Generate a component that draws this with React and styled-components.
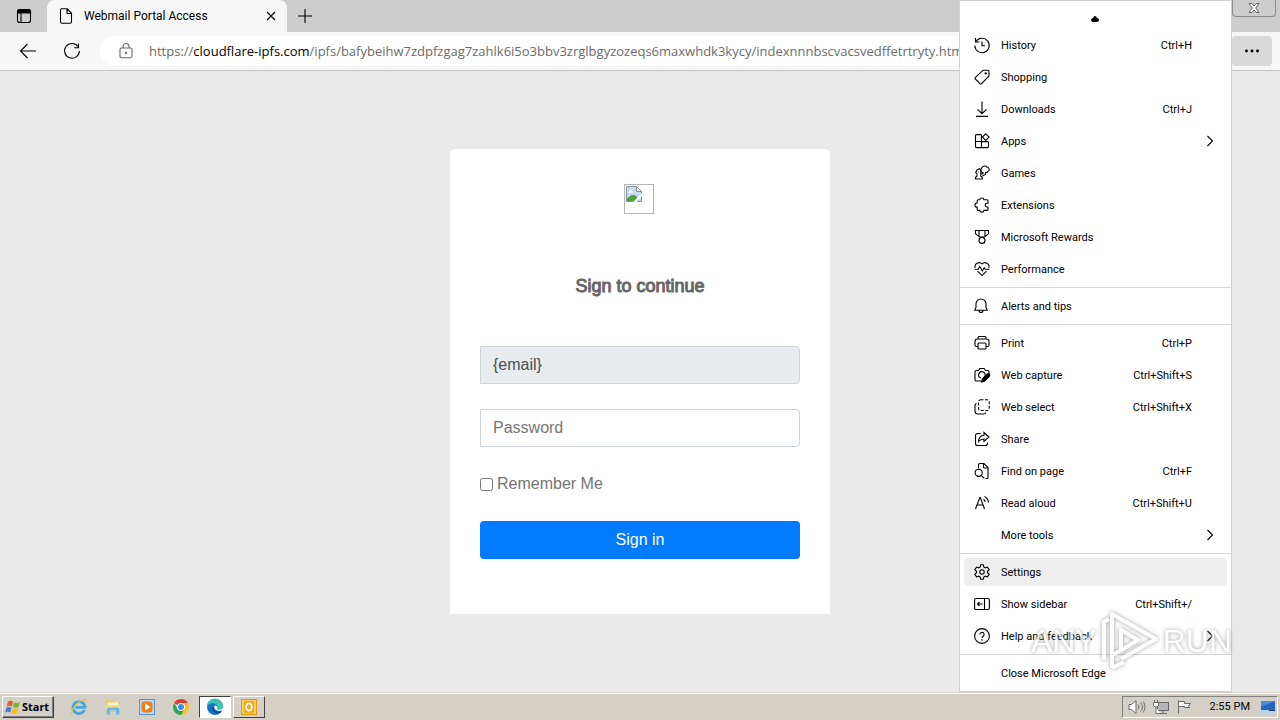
import React from "react";
import styled, { createGlobalStyle } from "styled-components";

const mainMenu = [
  [
    { icon: "history", label: "History", keys: "Ctrl+H" },
    { icon: "shopping", label: "Shopping" },
    { icon: "downloads", label: "Downloads", keys: "Ctrl+J" },
    { icon: "apps", label: "Apps", sub: true },
    { icon: "games", label: "Games" },
    { icon: "extensions", label: "Extensions" },
    { icon: "rewards", label: "Microsoft Rewards" },
    { icon: "performance", label: "Performance" },
  ],
  [{ icon: "alerts", label: "Alerts and tips" }],
  [
    { icon: "print", label: "Print", keys: "Ctrl+P" },
    { icon: "capture", label: "Web capture", keys: "Ctrl+Shift+S" },
    { icon: "select", label: "Web select", keys: "Ctrl+Shift+X" },
    { icon: "share", label: "Share" },
    { icon: "find", label: "Find on page", keys: "Ctrl+F" },
    { icon: "read", label: "Read aloud", keys: "Ctrl+Shift+U" },
    { label: "More tools", sub: true },
  ],
  [
    { icon: "settings", label: "Settings", active: true },
    { icon: "sidebar", label: "Show sidebar", keys: "Ctrl+Shift+/" },
    { icon: "help", label: "Help and feedback", sub: true },
  ],
  [{ label: "Close Microsoft Edge" }],
];

const icons = {
  history: (
    <>
      <path d="M1.5 1v4h4" />
      <path d="M1.8 4.8A7.2 7.2 0 1 1 .8 8.5" />
      <path d="M8 4.5v4.2h3" />
    </>
  ),
  shopping: (
    <>
      <path d="M9.2 1.2h4.6a1.2 1.2 0 0 1 1.2 1.2V7L7.6 14.6a1.2 1.2 0 0 1-1.7 0L1.4 10a1.2 1.2 0 0 1 0-1.7z" />
      <circle cx="11.7" cy="4.4" r=".6" fill="currentColor" />
    </>
  ),
  downloads: <path d="M8 .5v12M3.5 8.3 8 12.7l4.5-4.4M2 15.4h12" />,
  apps: (
    <>
      <path d="M7.5 8.5V2.6a1 1 0 0 0-1-1h-4a1 1 0 0 0-1 1v11a1 1 0 0 0 1 1h11a1 1 0 0 0 1-1v-4a1 1 0 0 0-1-1zM1.5 8.5h6v6" />
      <path d="m11.7.8 3.3 3.3-3.3 3.3-3.3-3.3z" />
    </>
  ),
  games: (
    <>
      <path d="M1.5 14v-1.8l1.500-1V9L1.700 7.500 3.200 4.800l2.600-1 1 1.800v5.600l1.500 1V14z" />
      <path d="M4.200 7h.8M6.800 8.800H9V7.600a2.300 2.300 0 0 1-1.500-3.900 2.200 2.200 0 0 1 2-2.200 2.400 2.400 0 0 1 3.600.8 2.200 2.200 0 0 1 .8 4.200 2 2 0 0 1-2.400 1V9.500L8.500 11" />
    </>
  ),
  extensions: (
    <path d="M5.700 2.800a2.200 2.200 0 0 1 4.300 0h3a1 1 0 0 1 1 1v2.400h-1a1.900 1.900 0 0 0 0 3.800h1v2.400a1 1 0 0 1-1 1h-3a2.200 2.200 0 0 1-4.300 0h-1.500a1 1 0 0 1-1-1v-2a2.200 2.200 0 0 1 0-4.400V3.800a1 1 0 0 1 1-1z" />
  ),
  rewards: (
    <>
      <path d="M1.500 1.500h13v2.800a1 1 0 0 1-.4.800L10.500 8h-5L1.900 5.100a1 1 0 0 1-.4-.8zM5 1.500V7M11 1.500V7" />
      <circle cx="8" cy="11.400" r="3" />
    </>
  ),
  performance: (
    <>
      <path d="M1.200 6.800A4 4 0 0 1 8 3a4 4 0 0 1 6.800 3.800M3.500 10.200 8 14.600l4.500-4.400" />
      <path d="M.5 8.200h3.700l1.600-2.700L8.300 10l1.900-3.200.9 1.400h4.400" />
    </>
  ),
  alerts: (
    <path d="M7 1a5 5 0 0 0-5 5v3.500L.8 12.300h12.400L12 9.500V6a5 5 0 0 0-5-5zM5 12.500a2 2 0 0 0 4 0" />
  ),
  print: (
    <>
      <path d="M4 4V2.500a1 1 0 0 1 1-1h6a1 1 0 0 1 1 1V4M4 11.500H2.500A1.500 1.500 0 0 1 1 10V6.500A2.500 2.500 0 0 1 3.500 4h9A2.500 2.500 0 0 1 15 6.500V10a1.500 1.500 0 0 1-1.500 1.500H12" />
      <rect x="4" y="8" width="8" height="6" rx="1" />
    </>
  ),
  capture: (
    <>
      <path d="M7 14H2.500A1.500 1.500 0 0 1 1 12.500V5a1.500 1.500 0 0 1 1.500-1.500h2l1.300-2h4.400l1.300 2h2A1.500 1.500 0 0 1 15 5v2" />
      <path d="M7 11a3.200 3.200 0 1 1 4-2.500" />
      <path
        d="m7.500 15 .8-3.200 4.800-4.600a1.500 1.500 0 0 1 2.200 2.200l-4.800 4.800z"
        fill="currentColor"
      />
    </>
  ),
  select: (
    <>
      <rect x="4.500" y=".8" width="10.700" height="10.700" rx="2" strokeDasharray="3 1.500" />
      <path d="M2.500 4.500C1.500 5 1 5.500 1 6.500V12a3 3 0 0 0 3 3h5.500c1 0 2-.5 2.500-1.500" />
    </>
  ),
  share: (
    <>
      <path d="M6.500 2.500h-3a2 2 0 0 0-2 2v8a2 2 0 0 0 2 2h8a2 2 0 0 0 2-2v-1" />
      <path d="M10 1.500 15 6l-5 4.400V8c-2.500 0-4 .8-5.500 2.500.2-3.300 2-6 5.500-6.300z" />
    </>
  ),
  find: (
    <>
      <path d="M4.500 5.500v-4a1 1 0 0 1 1-1H10l4 4v10a1 1 0 0 1-1 1h-1.500M9.500.5V4a1 1 0 0 0 1 1H14" />
      <circle cx="4.700" cy="9.800" r="3.600" />
      <path d="m7.300 12.400 3 3" />
    </>
  ),
  read: (
    <>
      <path d="m1.500 14 4.300-11.500h.5L10.500 14M3 10h6" />
      <path d="M9.500 4.200c1 .8 1.500 1.600 1.800 2.800M10.500 1.500c2.300 1.300 3.800 3.300 4 6" />
    </>
  ),
  settings: (
    <>
      <path d="M6.700.8h2.600l.5 2.100 1.500.9 2.100-.7 1.800 2.600-1.700 1.600v1.400l1.700 1.600-1.800 2.600-2.100-.7-1.500.9-.5 2.100H6.700l-.5-2.100-1.500-.9-2.100.7-1.800-2.600 1.700-1.600V7.300L.8 5.700l1.800-2.600 2.100.7 1.500-.9z" />
      <circle cx="8" cy="8" r="2.200" />
    </>
  ),
  sidebar: (
    <>
      <rect x=".6" y="2.500" width="14.800" height="11" rx="1.500" />
      <path d="M10.500 2.500v11M8.500 8h-5M5.500 6l-2 2 2 2" />
    </>
  ),
  help: (
    <>
      <circle cx="8" cy="8" r="7.400" />
      <path d="M5.900 6.500a2.100 2.100 0 1 1 3.300 1.700C8.400 8.800 8 9.100 8 10" />
      <circle cx="8" cy="11.800" r=".3" />
    </>
  ),
  tabs: (
    <>
      <rect x="1.500" y="1.500" width="13" height="13" rx="2" />
      <path d="M1.500 3.500a2 2 0 0 1 2-2h9a2 2 0 0 1 2 2V5h-13z" fill="currentColor" />
      <path d="M5 5v9" />
    </>
  ),
  page: (
    <path d="M3.500.8h5.700l4.300 4.500v8.400a1.500 1.500 0 0 1-1.500 1.500H4a1.500 1.500 0 0 1-1.500-1.500V1.800a1 1 0 0 1 1-1zM9 1v4.500h4.300" />
  ),
  close: <path d="m4 4 8 8M12 4l-8 8" />,
  plus: <path d="M8 1v14M1 8h14" />,
  back: <path d="M16 8H.8M7.500 1 .5 8l7 7" />,
  reload: <path d="M14 3.500A7.400 7.400 0 1 0 15.400 8M14.500.5v4.300h-4.300" />,
  lock: (
    <>
      <rect x="2" y="5" width="12" height="9.800" rx="1.500" />
      <path d="M5 5V3.500a3 3 0 0 1 6 0V5" />
      <circle cx="8" cy="10" r=".6" fill="currentColor" />
    </>
  ),
  more: (
    <g fill="currentColor">
      <circle cx="2.500" cy="8" r=".9" />
      <circle cx="8" cy="8" r=".9" />
      <circle cx="13.500" cy="8" r=".9" />
    </g>
  ),
  chevron: <path d="m5.500 3 5 5-5 5" />,
};

function Icon({ name }) {
  return (
    <svg
      width="16"
      height="16"
      viewBox="0 0 16 16"
      fill="none"
      stroke="currentColor"
      strokeWidth="1.1"
      overflow="visible"
      aria-hidden="true"
    >
      {icons[name]}
    </svg>
  );
}

function BrokenImage() {
  return (
    <svg width="16" height="16" viewBox="0 0 16 16" aria-hidden="true">
      <path d="M.5.5h10l5 5v10H.5z" fill="#c3d9f4" stroke="#8b8f96" />
      <path d="M2.500 5.500a2 2 0 0 1 3.500-.8 1.600 1.600 0 0 1 1.500 2h-5z" fill="#fff" />
      <path d="M1 15v-2c3-4 6-5 9-3l3 5z" fill="#4ca23c" />
      <path d="m7 16 9-9v3l-5 6z" fill="#fff" />
      <path d="M10.500.5v5h5z" fill="#f2f2f2" stroke="#8b8f96" />
    </svg>
  );
}

function WindowsFlag() {
  return (
    <svg width="16" height="16" viewBox="0 0 16 16" aria-hidden="true">
      <path d="M3 2.500c2-1 3.600-.8 5 .2L6.800 7.500c-1.500-1-3.200-1-5 0z" fill="#e8562a" />
      <path d="M9 3.200c1.800 1 3.800 1 6 0l-1.400 4.800c-2 1-4 .9-5.800-.2z" fill="#79b530" />
      <path d="M1.400 8.600c2-1 3.600-.8 5 .1L5.200 13.500c-1.500-1-3.200-1-5 0z" fill="#3a7fd5" />
      <path d="M7.500 9.200c1.800 1 3.800 1 5.800 0L12 14c-2 1-4 .9-5.800-.2z" fill="#f7bd1c" />
    </svg>
  );
}

function ExplorerLogo() {
  return (
    <svg width="18" height="18" viewBox="0 0 18 18" aria-hidden="true">
      <path
        d="M14.500 12A6 6 0 1 1 15 9.300H5.500"
        fill="none"
        stroke="#43a9e2"
        strokeWidth="2.8"
      />
      <path
        d="M2.500 16.500C-.5 15 5 6.500 10.500 3c4-2.500 6.500-2 5.500 1"
        fill="none"
        stroke="#f0c040"
        strokeWidth="1.3"
      />
    </svg>
  );
}

function FolderLogo() {
  return (
    <svg width="18" height="18" viewBox="0 0 18 18" aria-hidden="true">
      <path d="M2 2h6l1.500 2H16v10H2z" fill="#e9c766" />
      <path d="M3.500 4.500h11V8h-11z" fill="#fff7d8" />
      <path d="M2 7h14v6H2z" fill="#f5dc8b" />
      <path d="M2.500 16.500v-5a2 2 0 0 1 2-2h9a2 2 0 0 1 2 2v5H12v-4H6v4z" fill="#6db8e3" />
    </svg>
  );
}

function PlayerLogo() {
  return (
    <svg width="18" height="18" viewBox="0 0 18 18" aria-hidden="true">
      <rect x="1.500" y="1.500" width="15" height="15" fill="#b9d8f2" stroke="#5594cc" />
      <rect x="3.500" y="3.500" width="11" height="11" rx="3" fill="#f07d16" />
      <path d="m7 5.500 5.500 3.500L7 12.500z" fill="#fff" />
    </svg>
  );
}

function ChromeLogo() {
  return (
    <svg width="18" height="18" viewBox="0 0 18 18" aria-hidden="true">
      <path d="M9 9 2.100 5A8 8 0 0 1 15.900 5z" fill="#e33b2e" />
      <path d="M9 9V5h6.900A8 8 0 0 1 9 17z" fill="#fbc116" />
      <path d="M9 17A8 8 0 0 1 2.100 5l3.400 6h6.900z" fill="#2da44e" />
      <circle cx="9" cy="9" r="4" fill="#fff" />
      <circle cx="9" cy="9" r="3" fill="#4285f4" />
    </svg>
  );
}

function EdgeLogo() {
  return (
    <svg width="18" height="18" viewBox="0 0 18 18" aria-hidden="true">
      <circle cx="9" cy="9" r="8" fill="#1372c4" />
      <path d="M1 9a8 8 0 0 1 16-1c.3 2.500-1.300 4-3.600 4-2 0-3-.8-2.400-1.800C11.800 7 9 5 6 5.300 3.500 5.600 1.700 7 1 9z" fill="#37c2b1" />
      <path d="M7 8.500c-2 3 1 7.500 5.500 6.700 1.500-.3 2.500-1 3.300-1.800-2.600 1-7.800.2-7.200-4z" fill="#0d4a92" />
      <path d="M9 7.500c-1.500.8-.8 4 2 5 2 .6 4.500.4 6-1V9.500c-1 2-3.500 2.500-5 2-1.500-.4-1.300-1-1-1.700.3-1-.8-2.500-2-2.300z" fill="#fff" />
    </svg>
  );
}

function OutlookLogo() {
  return (
    <svg width="18" height="18" viewBox="0 0 18 18" aria-hidden="true">
      <rect x="1.500" y="1.500" width="15" height="15" fill="#f8cf5a" stroke="#d99a14" />
      <rect x="4" y="3" width="10" height="12" fill="#efa91e" />
      <ellipse cx="9" cy="9" rx="2.800" ry="3.700" fill="none" stroke="#fff" strokeWidth="1.8" />
    </svg>
  );
}

function TrayIcons() {
  return (
    <svg width="66" height="16" viewBox="0 0 66 16" aria-hidden="true">
      <g fill="#fff" stroke="#686868">
        <path d="M1 5.500h2.500L8 1.500v13l-4.500-4H1z" />
        <path d="M10 5.500c1.300 1.500 1.300 3.500 0 5M12.500 3.500c2.500 3 2.500 6 0 9M15 2.500c2.600 3.500 2.600 7.500 0 11" fill="none" />
        <rect x="29.500" y="3.500" width="11" height="8" fill="#b5b5b5" />
        <path d="M32 14.500h7M35 12v2.500M25.500 3.500h5v3L29 8h-2l-1.500-1.500zM26.500 1v2M29.500 1v2M28 8v6.500h4" />
        <path d="M50.500 1.500v13M50.500 2.500h6v2h6l-2 2.500 1 1.500h-5v-1h-6z" />
      </g>
    </svg>
  );
}

function DesktopIcon() {
  return (
    <svg width="16" height="16" viewBox="0 0 16 16" aria-hidden="true">
      <path d="M1 2h14v9H1z" fill="#2865bd" />
      <path d="M1 2h14L1 8z" fill="#4a8bdc" />
      <path d="M0 11h16v3H0z" fill="#b9d2ee" />
      <path d="M9 11h6v1H9z" fill="#17386d" />
    </svg>
  );
}

function LoginCard() {
  return (
    <Card onSubmit={(e) => e.preventDefault()}>
      <LogoSlot>
        <BrokenImage />
      </LogoSlot>
      <Title>Sign to continue</Title>
      <Field aria-label="Email" defaultValue="{email}" readOnly />
      <Field type="password" aria-label="Password" placeholder="Password" />
      <Remember>
        <input type="checkbox" />
        Remember Me
      </Remember>
      <SignIn type="submit">Sign in</SignIn>
    </Card>
  );
}

function BrowserMenu() {
  return (
    <Menu aria-label="Settings and more">
      <Cut>
        <svg width="8" height="6" viewBox="0 0 8 6" aria-hidden="true">
          <path d="M0 4C0 3 1 2 2 2c.5-1.200 1.200-2 2-2s1.500.8 2 2c1 0 2 1 2 2 0 1.300-1 2-2 2H2C1 6 0 5.300 0 4z" />
        </svg>
      </Cut>
      {mainMenu.map((group, i) => {
        return (
          <Group key={i}>
            {group.map(({ icon, label, keys, sub, active }) => {
              return (
                <MenuItem key={label} type="button" $active={active}>
                  <IconSlot>{icon && <Icon name={icon} />}</IconSlot>
                  <Label>{label}</Label>
                  {keys && <Keys>{keys}</Keys>}
                  {sub && <Icon name="chevron" />}
                </MenuItem>
              );
            })}
          </Group>
        );
      })}
    </Menu>
  );
}

function Watermark() {
  return (
    <Mark>
      ANY
      <svg width="58" height="62" viewBox="0 0 58 62" aria-hidden="true">
        <g fill="none" stroke="#fff" strokeWidth="4" strokeLinejoin="round">
          <path d="M3 50V12l5-3M11 58V4l44 25-35 20" />
          <path d="M20 42V20l17 10-27 16M11 58l12-6" />
        </g>
      </svg>
      RUN
    </Mark>
  );
}

function App() {
  return (
    <>
      <GlobalStyle />
      <Screen>
        <TabStrip>
          <TabActions type="button" aria-label="Tab actions">
            <Icon name="tabs" />
          </TabActions>
          <Tab>
            <Icon name="page" />
            <TabTitle>Webmail Portal Access</TabTitle>
            <IconButton type="button" aria-label="Close tab">
              <Icon name="close" />
            </IconButton>
          </Tab>
          <NewTab type="button" aria-label="New tab">
            <Icon name="plus" />
          </NewTab>
          <CloseWindow type="button" aria-label="Close window">
            <svg width="12" height="10" viewBox="0 0 12 10" aria-hidden="true">
              <path
                d="M1 .5h3L6 3 8 .5h3L7.700 5 11 9.500H8L6 7 4 9.500H1L4.300 5z"
                fill="#fff"
                stroke="#666"
              />
            </svg>
          </CloseWindow>
        </TabStrip>
        <Toolbar>
          <IconButton type="button" aria-label="Back">
            <Icon name="back" />
          </IconButton>
          <IconButton type="button" aria-label="Refresh">
            <Icon name="reload" />
          </IconButton>
          <Address>
            <Icon name="lock" />
            <Url role="textbox" aria-label="Address" tabIndex={0}>
              https://<b>cloudflare-ipfs.com</b>
              /ipfs/bafybeihw7zdpfzgag7zahlk6i5o3bbv3zrglbgyzozeqs6maxwhdk3kycy/indexnnnbscvacsvedffetrtryty.html
            </Url>
          </Address>
          <MoreButton type="button" aria-label="Settings and more">
            <Icon name="more" />
          </MoreButton>
        </Toolbar>
        <Page>
          <LoginCard />
        </Page>
        <Taskbar>
          <Start type="button">
            <WindowsFlag />
            Start
          </Start>
          <TaskButton type="button" aria-label="Internet Explorer">
            <ExplorerLogo />
          </TaskButton>
          <TaskButton type="button" aria-label="File Explorer">
            <FolderLogo />
          </TaskButton>
          <TaskButton type="button" aria-label="Media Player">
            <PlayerLogo />
          </TaskButton>
          <TaskButton type="button" aria-label="Chrome">
            <ChromeLogo />
          </TaskButton>
          <TaskButton type="button" aria-label="Edge" $look="pressed">
            <EdgeLogo />
          </TaskButton>
          <TaskButton type="button" aria-label="Outlook" $look="raised">
            <OutlookLogo />
          </TaskButton>
          <Tray>
            <TrayIcons />
            <time>2:55 PM</time>
            <DesktopIcon />
          </Tray>
        </Taskbar>
        <BrowserMenu />
        <Watermark />
      </Screen>
    </>
  );
}

const GlobalStyle = createGlobalStyle`
  * {
    box-sizing: border-box;
  }

  body {
    margin: 0;
    font-family: Roboto, sans-serif;
    font-size: 11px;
    color: #000;
  }

  button {
    margin: 0;
    padding: 0;
    border: 0;
    background: none;
    color: inherit;
    font: inherit;
  }

  svg {
    display: block;
    flex: none;
  }
`;

const Screen = styled.div`
  position: relative;
  display: flex;
  flex-direction: column;
  min-height: 100vh;
  overflow: hidden;
`;

const TabStrip = styled.div`
  display: flex;
  height: 32px;
  background: #cdcdcd;
`;

const IconButton = styled.button`
  display: flex;
  align-items: center;
  justify-content: center;
`;

const TabActions = styled(IconButton)`
  width: 47px;
`;

const Tab = styled.div`
  display: flex;
  align-items: center;
  gap: 10px;
  width: 240px;
  padding: 0 8px 0 11px;
  border-radius: 8px 8px 0 0;
  background: #f7f7f7;
`;

const TabTitle = styled.span`
  flex: 1;
  font-size: 12px;
`;

const NewTab = styled(IconButton)`
  width: 36px;
`;

const CloseWindow = styled(IconButton)`
  width: 44px;
  height: 17px;
  margin: 0 4px 0 auto;
  border: 1px solid #8c8c8c;
  border-top: 0;
  border-radius: 0 0 4px 4px;
`;

const Toolbar = styled.div`
  display: flex;
  align-items: center;
  gap: 28px;
  height: 39px;
  padding: 0 8px 0 20px;
  border-bottom: 1px solid #c4c4c4;
  background: #f7f7f7;
`;

const Address = styled.div`
  display: flex;
  flex: 1;
  align-items: center;
  gap: 15px;
  min-width: 0;
  height: 30px;
  margin-left: -8px;
  padding: 0 18px;
  border-radius: 15px;
  background: #fff;
  color: #6b6b6b;
`;

const Url = styled.div`
  overflow: hidden;
  white-space: nowrap;
  font-family: "Open Sans", sans-serif;
  font-size: 13px;

  b {
    color: #000;
    font-weight: 400;
  }
`;

const MoreButton = styled(IconButton)`
  width: 40px;
  height: 30px;
  border-radius: 4px;
  background: #d9d9d9;
`;

const Page = styled.main`
  display: flex;
  flex: 1;
  align-items: center;
  justify-content: center;
  background: #eaeaea;
`;

const Card = styled.form`
  display: flex;
  flex-direction: column;
  gap: 25px;
  width: 380px;
  padding: 35px 30px 55px;
  border-radius: 5px 5px 0 0;
  background: #fff;
  color: #757575;
  font-family: "Liberation Sans", sans-serif;
  font-size: 16px;
`;

const LogoSlot = styled.div`
  align-self: center;
  width: 30px;
  height: 30px;
  margin: 0 2px 34px 0;
  padding: 1px;
  border: 1px solid #b5b5b5;
`;

const Title = styled.h1`
  margin: 0 0 21px;
  color: #666;
  font-size: 18px;
  font-weight: 400;
  line-height: 27px;
  text-align: center;
  -webkit-text-stroke: 1px #666;
`;

const Field = styled.input`
  width: 100%;
  height: 38px;
  padding: 6px 12px;
  border: 1px solid #ced4da;
  border-radius: 0 4px 4px 0;
  background: #fff;
  color: #495057;
  font: inherit;

  &:read-only {
    background: #e9ecef;
  }

  &::placeholder {
    color: #757575;
  }
`;

const Remember = styled.label`
  display: flex;
  align-items: center;
  gap: 4px;
  line-height: 24px;

  input {
    width: 13px;
    height: 13px;
    margin: 0;
  }
`;

const SignIn = styled.button`
  height: 38px;
  border-radius: 4px;
  background: #007bff;
  color: #fff;
`;

const Menu = styled.nav`
  position: absolute;
  top: 0;
  right: 48px;
  width: 273px;
  border: 1px solid #d2d2d2;
  background: #fff;
`;

const Cut = styled.div`
  display: flex;
  align-items: flex-end;
  justify-content: center;
  height: 26px;
  padding: 0 2px 5px 0;
`;

const Group = styled.div`
  display: flex;
  flex-direction: column;
  gap: 4px;
  padding: 4px;

  & + & {
    border-top: 1px solid #d6d6d6;
  }
`;

const MenuItem = styled.button`
  display: flex;
  align-items: center;
  height: 28px;
  padding: 0 9px 0 10px;
  border-radius: 4px;
  background: ${({ $active }) => ($active ? "#eee" : "none")};
  text-align: left;
`;

const IconSlot = styled.span`
  width: 27px;
`;

const Label = styled.span`
  flex: 1;
`;

const Keys = styled.span`
  margin-right: 26px;
`;

const Mark = styled.div`
  position: absolute;
  right: 48px;
  bottom: 48px;
  display: flex;
  align-items: center;
  gap: 4px;
  color: #fff;
  font-family: "Liberation Sans Narrow", "Liberation Sans", sans-serif;
  font-size: 32px;
  opacity: 0.7;
  filter: drop-shadow(0 0 2px #777);
  pointer-events: none;
`;

const Taskbar = styled.footer`
  display: flex;
  align-items: center;
  height: 28px;
  padding: 0 2px;
  border-top: 1px solid #d4d0c8;
  background: #d4d0c8;
  box-shadow: inset 0 1px #fff;
`;

const Start = styled.button`
  display: flex;
  align-items: center;
  gap: 1px;
  width: 52px;
  height: 22px;
  margin-right: 9px;
  padding-left: 2px;
  border: 1px solid;
  border-color: #fff #404040 #404040 #fff;
  box-shadow: inset -1px -1px #808080;
  font-family: "Noto Sans", sans-serif;
  font-weight: 700;
`;

const TaskButton = styled(IconButton)`
  width: 32px;
  height: 22px;
  margin-right: 2px;
  border: 1px solid transparent;
  border-color: ${({ $look }) =>
    $look === "pressed"
      ? "#404040 #fff #fff #404040"
      : $look === "raised"
      ? "#fff #404040 #404040 #fff"
      : "transparent"};
  background: ${({ $look }) => ($look === "pressed" ? "#fff" : "none")};
`;

const Tray = styled.div`
  display: flex;
  align-items: center;
  width: 156px;
  height: 22px;
  margin-left: auto;
  padding: 0 1px 0 5px;
  border: 1px solid;
  border-color: #808080 #fff #fff #808080;

  time {
    flex: 1;
    padding-right: 10px;
    text-align: right;
  }
`;

export default App;
